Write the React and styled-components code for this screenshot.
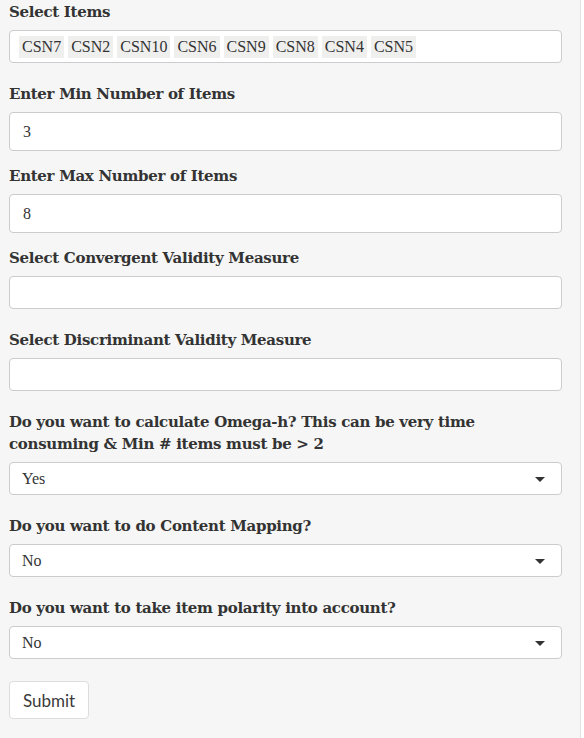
import React from 'react';
import styled, { createGlobalStyle } from 'styled-components';

const GlobalStyle = createGlobalStyle`
  html, body {
    margin: 0;
    padding: 0;
    background: #ffffff;
  }
  * { box-sizing: border-box; }
`;

const Well = styled.div`
  width: 581px;
  min-height: 738px;
  background: #f5f6f5;
  border-right: 1px solid #e3e3e3;
  padding: 1px 18px 0 9px;
  font-family: "Liberation Serif", Georgia, serif;
  color: #333;
`;

const Group = styled.div`
  margin-bottom: 15px;
`;

const Label = styled.label`
  display: block;
  font-family: "DejaVu Serif", Georgia, serif;
  font-weight: bold;
  font-size: 15px;
  line-height: 22px;
  margin-bottom: 7px;
  letter-spacing: -0.3px;
`;

const Control = styled.div`
  height: 38px;
`;

const Box = styled.div`
  position: relative;
  display: flex;
  align-items: center;
  flex-wrap: wrap;
  gap: 4px;
  height: ${p => (p.$tall ? '39px' : '33px')};
  padding: 0 ${p => (p.$caret ? '40px' : '9px')} 0 ${p => (p.$tall ? '13px' : '9px')};
  background: #fff;
  border: 1px solid #ccc;
  border-radius: 4px;
  font-size: 16px;

  ${p => p.$caret && `
    &::after {
      content: "";
      position: absolute;
      right: 16px;
      top: 14px;
      border-left: 5px solid transparent;
      border-right: 5px solid transparent;
      border-top: 5px solid #333;
    }
  `}
`;

const Value = styled.span`
  padding-left: 3px;
`;

const Tag = styled.span`
  display: inline-flex;
  align-items: center;
  height: 22px;
  padding: 0 3px;
  background: #efefee;
  color: #333;
  font-size: 16px;
`;

const Button = styled.button`
  margin-top: 2px;
  height: 38px;
  padding: 0 13px;
  background: #fff;
  border: 1px solid #ddd;
  border-radius: 4px;
  font-family: Lato, "Open Sans", sans-serif;
  font-weight: 400;
  font-size: 17px;
  color: #3a3a3a;
`;

const items = ['CSN7', 'CSN2', 'CSN10', 'CSN6', 'CSN9', 'CSN8', 'CSN4', 'CSN5'];

const Field = ({ label, children }) => (
  <Group>
    <Label>{label}</Label>
    <Control>{children}</Control>
  </Group>
);

export default function App() {
  return (
    <>
      <GlobalStyle />
      <Well>
        <Field label="Select Items">
          <Box>
            {items.map(i => <Tag key={i}>{i}</Tag>)}
          </Box>
        </Field>
        <Field label="Enter Min Number of Items">
          <Box $tall>3</Box>
        </Field>
        <Field label="Enter Max Number of Items">
          <Box $tall>8</Box>
        </Field>
        <Field label="Select Convergent Validity Measure">
          <Box />
        </Field>
        <Field label="Select Discriminant Validity Measure">
          <Box />
        </Field>
        <Field label="Do you want to calculate Omega-h? This can be very time consuming & Min # items must be > 2">
          <Box $caret><Value>Yes</Value></Box>
        </Field>
        <Field label="Do you want to do Content Mapping?">
          <Box $caret><Value>No</Value></Box>
        </Field>
        <Field label="Do you want to take item polarity into account?">
          <Box $caret><Value>No</Value></Box>
        </Field>
        <Button>Submit</Button>
      </Well>
    </>
  );
}
